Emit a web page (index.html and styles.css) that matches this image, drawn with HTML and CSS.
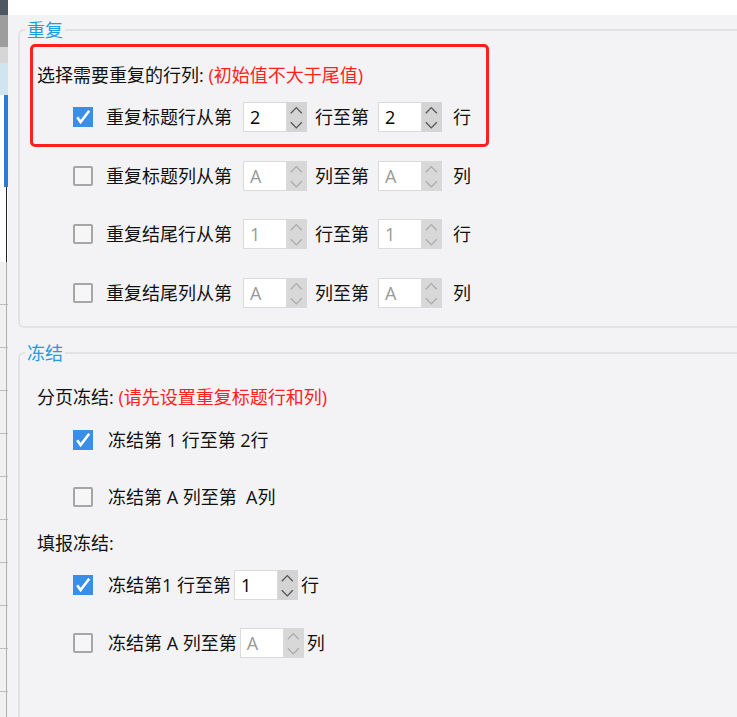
FILE: index.html
```html
<!DOCTYPE html>
<html>
<head>
    <meta charset="utf-8">
    <title>重复与冻结</title>
    <link rel="stylesheet" href="styles.css">
</head>
<body>
    <div class="screen">
        <div class="backdrop">
            <div class="bd-top"></div>
            <div class="bd-gray"></div>
            <div class="bd-light"></div>
            <div class="bd-sky"></div>
            <div class="bd-sel"></div>
            <div class="bd-cell"></div>
            <div class="bd-rows"></div>
        </div>

        <div class="dialog">
            <div class="dlg-head"></div>
            <div class="dlg-body">

                <fieldset class="group group-repeat">
                    <legend>重复</legend>
                    <div class="group-inner">
                        <div class="highlight"></div>
                        <div class="caption">选择需要重复的行列: <span class="hint">(初始值不大于尾值)</span></div>
                        <div class="rows rows-repeat">
                            <div class="row">
                                <span class="check on"><svg viewBox="0 0 20 20" width="20" height="20"><path d="M4.2 10.2 L7.6 15 L16.2 3.8" fill="none" stroke="#fff" stroke-width="2.6"/></svg></span>
                                <span class="label">重复标题行从第</span>
                                <span class="spin"><span class="spin-val">2</span><span class="spin-btns"><svg viewBox="0 0 20 30" width="20" height="30"><path d="M3.8 11.3 L9.3 5.6 L14.8 11.3 M3.8 20.2 L9.3 25.9 L14.8 20.2" fill="none" stroke-width="1.3"/></svg></span></span>
                                <span class="mid">行至第</span>
                                <span class="spin to"><span class="spin-val">2</span><span class="spin-btns"><svg viewBox="0 0 20 30" width="20" height="30"><path d="M3.8 11.3 L9.3 5.6 L14.8 11.3 M3.8 20.2 L9.3 25.9 L14.8 20.2" fill="none" stroke-width="1.3"/></svg></span></span>
                                <span class="unit">行</span>
                            </div>
                            <div class="row">
                                <span class="check off"></span>
                                <span class="label">重复标题列从第</span>
                                <span class="spin off"><span class="spin-val">A</span><span class="spin-btns"><svg viewBox="0 0 20 30" width="20" height="30"><path d="M3.8 11.3 L9.3 5.6 L14.8 11.3 M3.8 20.2 L9.3 25.9 L14.8 20.2" fill="none" stroke-width="1.3"/></svg></span></span>
                                <span class="mid">列至第</span>
                                <span class="spin to off"><span class="spin-val">A</span><span class="spin-btns"><svg viewBox="0 0 20 30" width="20" height="30"><path d="M3.8 11.3 L9.3 5.6 L14.8 11.3 M3.8 20.2 L9.3 25.9 L14.8 20.2" fill="none" stroke-width="1.3"/></svg></span></span>
                                <span class="unit">列</span>
                            </div>
                            <div class="row">
                                <span class="check off"></span>
                                <span class="label">重复结尾行从第</span>
                                <span class="spin off"><span class="spin-val">1</span><span class="spin-btns"><svg viewBox="0 0 20 30" width="20" height="30"><path d="M3.8 11.3 L9.3 5.6 L14.8 11.3 M3.8 20.2 L9.3 25.9 L14.8 20.2" fill="none" stroke-width="1.3"/></svg></span></span>
                                <span class="mid">行至第</span>
                                <span class="spin to off"><span class="spin-val">1</span><span class="spin-btns"><svg viewBox="0 0 20 30" width="20" height="30"><path d="M3.8 11.3 L9.3 5.6 L14.8 11.3 M3.8 20.2 L9.3 25.9 L14.8 20.2" fill="none" stroke-width="1.3"/></svg></span></span>
                                <span class="unit">行</span>
                            </div>
                            <div class="row">
                                <span class="check off"></span>
                                <span class="label">重复结尾列从第</span>
                                <span class="spin off"><span class="spin-val">A</span><span class="spin-btns"><svg viewBox="0 0 20 30" width="20" height="30"><path d="M3.8 11.3 L9.3 5.6 L14.8 11.3 M3.8 20.2 L9.3 25.9 L14.8 20.2" fill="none" stroke-width="1.3"/></svg></span></span>
                                <span class="mid">列至第</span>
                                <span class="spin to off"><span class="spin-val">A</span><span class="spin-btns"><svg viewBox="0 0 20 30" width="20" height="30"><path d="M3.8 11.3 L9.3 5.6 L14.8 11.3 M3.8 20.2 L9.3 25.9 L14.8 20.2" fill="none" stroke-width="1.3"/></svg></span></span>
                                <span class="unit">列</span>
                            </div>
                        </div>
                    </div>
                </fieldset>

                <fieldset class="group group-freeze">
                    <legend>冻结</legend>
                    <div class="group-inner">
                        <div class="caption">分页冻结: <span class="hint">(请先设置重复标题行和列)</span></div>
                        <div class="rows rows-page">
                            <div class="row">
                                <span class="check on"><svg viewBox="0 0 20 20" width="20" height="20"><path d="M4.2 10.2 L7.6 15 L16.2 3.8" fill="none" stroke="#fff" stroke-width="2.6"/></svg></span>
                                <span class="label">冻结第 1 行至第 2行</span>
                            </div>
                            <div class="row">
                                <span class="check off"></span>
                                <span class="label">冻结第 A 列至第&nbsp;&nbsp;A列</span>
                            </div>
                        </div>

                        <div class="caption caption-fill">填报冻结:</div>
                        <div class="rows rows-fill">
                            <div class="row">
                                <span class="check on"><svg viewBox="0 0 20 20" width="20" height="20"><path d="M4.2 10.2 L7.6 15 L16.2 3.8" fill="none" stroke="#fff" stroke-width="2.6"/></svg></span>
                                <span class="label">冻结第1 行至第</span>
                                <span class="spin near"><span class="spin-val">1</span><span class="spin-btns"><svg viewBox="0 0 20 30" width="20" height="30"><path d="M3.8 11.3 L9.3 5.6 L14.8 11.3 M3.8 20.2 L9.3 25.9 L14.8 20.2" fill="none" stroke-width="1.3"/></svg></span></span>
                                <span class="unit near">行</span>
                            </div>
                            <div class="row">
                                <span class="check off"></span>
                                <span class="label">冻结第 A 列至第</span>
                                <span class="spin near off"><span class="spin-val">A</span><span class="spin-btns"><svg viewBox="0 0 20 30" width="20" height="30"><path d="M3.8 11.3 L9.3 5.6 L14.8 11.3 M3.8 20.2 L9.3 25.9 L14.8 20.2" fill="none" stroke-width="1.3"/></svg></span></span>
                                <span class="unit near">列</span>
                            </div>
                        </div>
                    </div>
                </fieldset>

            </div>
        </div>
    </div>
</body>
</html>
```

FILE: styles.css
```css
body {
    margin: 0;
    background-color: #f3f3f5;
    color: #111;
    font-family: "Open Sans", "Noto Sans CJK SC", sans-serif;
    overflow: hidden;
}
.screen {
    display: flex;
    width: 737px;
    height: 717px;
    overflow: hidden;
}

/* window behind the dialog */
.backdrop {
    width: 8px;
    flex: none;
    display: flex;
    flex-direction: column;
    background-color: #f0f0f0;
}
.bd-top {
    height: 15px;
    background-color: #4f5862;
}
.bd-gray {
    height: 32px;
    background-color: #9d9d9d;
}
.bd-light {
    height: 16px;
    background-color: #d6d6d6;
}
.bd-sky {
    height: 32px;
    background-color: #cfe5ef;
}
.bd-sel {
    height: 92px;
    background: linear-gradient(to right, #fff 4px, #2d79d6 4px);
}
.bd-cell {
    height: 75px;
    background: linear-gradient(to right, #fff 6px, #222 6px, #222 7px, #fff 7px);
}
.bd-rows {
    flex: 1;
    background:
        linear-gradient(to right, transparent 6px, #b0b0b0 6px, #b0b0b0 7px, transparent 7px),
        repeating-linear-gradient(to bottom, transparent 0, transparent 42px, #bdbdbd 42px, #bdbdbd 43px),
        #f0f0f0;
}

/* dialog */
.dialog {
    flex: 1;
    min-width: 0;
    display: flex;
    flex-direction: column;
}
.dlg-head {
    height: 15px;
    flex: none;
    background-color: #fff;
}
.dlg-body {
    flex: 1;
    padding: 3px 0 0 10px;
    background-color: #f3f3f5;
}

.group {
    box-sizing: border-box;
    width: 760px;
    min-width: 0;
    margin: 0;
    padding: 0 0 18px 5px;
    border: 2px solid #e2e2e4;
    border-radius: 6px;
}
.group legend {
    padding: 0 2px;
    font-size: 18px;
    line-height: 24px;
    color: #1b9de2;
}
.group-freeze {
    margin-top: 13px;
    padding-bottom: 120px;
}
.group-inner {
    position: relative;
    padding: 21px 0 0 12px;
}
.group-freeze .group-inner {
    padding-top: 20px;
}

/* annotation drawn over the first block */
.highlight {
    position: absolute;
    left: 5px;
    top: 2px;
    width: 459px;
    height: 103px;
    box-sizing: border-box;
    border: 3px solid #ff1f1f;
    border-radius: 5px;
}

.caption {
    font-size: 18px;
    line-height: 24px;
}
.hint {
    color: #ff2020;
}
.caption-fill {
    margin-top: 19px;
}

.rows {
    display: flex;
    flex-direction: column;
    padding-left: 36px;
}
.rows-repeat {
    margin-top: 15px;
    gap: 28.5px;
}
.rows-page {
    margin-top: 16px;
    gap: 27px;
}
.rows-fill {
    margin-top: 15px;
    gap: 28px;
}
.row {
    display: flex;
    align-items: center;
    height: 30px;
    font-size: 18px;
    line-height: 24px;
    white-space: nowrap;
}

.check {
    flex: none;
    box-sizing: border-box;
    width: 20px;
    height: 20px;
}
.check svg {
    display: block;
}
.check.on {
    background-color: #3a8ee8;
}
.check.off {
    border: 2px solid #a6a6a6;
    border-radius: 2px;
    background-color: #f6f6f7;
}

.label {
    margin-left: 13px;
}
.group-freeze .label {
    margin-left: 15px;
}
.mid {
    margin-left: 8px;
}
.unit {
    margin-left: 11px;
}
.unit.near {
    margin-left: 3px;
}

/* number spinner */
.spin {
    display: flex;
    height: 30px;
    margin-left: 11px;
}
.spin.to {
    margin-left: 9px;
}
.spin.near {
    margin-left: 3px;
}
.spin-val {
    box-sizing: border-box;
    width: 44px;
    height: 30px;
    padding-left: 6px;
    border: 1px solid #dadada;
    background-color: #fff;
    font-size: 18px;
    line-height: 28px;
    color: #000;
}
.spin-btns {
    width: 20px;
    height: 30px;
    background-color: #d4d4d4;
}
.spin-btns svg {
    display: block;
    stroke: #555;
}
.spin.off .spin-val {
    color: #9a9a9a;
}
.spin.off .spin-btns {
    background-color: #d8d8d8;
}
.spin.off .spin-btns svg {
    stroke: #ababab;
}
```
